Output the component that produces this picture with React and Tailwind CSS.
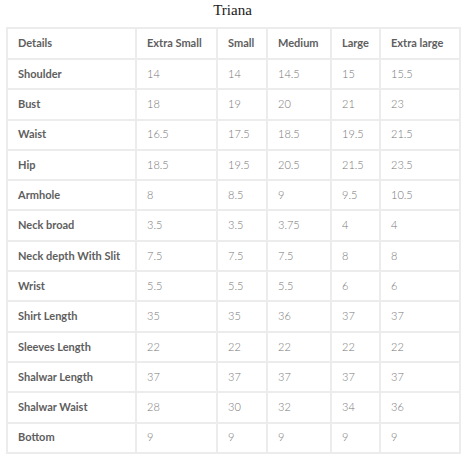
import React from "react";

const sizes = ["Extra Small", "Small", "Medium", "Large", "Extra large"];

const rows = [
  ["Shoulder", "14", "14", "14.5", "15", "15.5"],
  ["Bust", "18", "19", "20", "21", "23"],
  ["Waist", "16.5", "17.5", "18.5", "19.5", "21.5"],
  ["Hip", "18.5", "19.5", "20.5", "21.5", "23.5"],
  ["Armhole", "8", "8.5", "9", "9.5", "10.5"],
  ["Neck broad", "3.5", "3.5", "3.75", "4", "4"],
  ["Neck depth With Slit", "7.5", "7.5", "7.5", "8", "8"],
  ["Wrist", "5.5", "5.5", "5.5", "6", "6"],
  ["Shirt Length", "35", "35", "36", "37", "37"],
  ["Sleeves Length", "22", "22", "22", "22", "22"],
  ["Shalwar Length", "37", "37", "37", "37", "37"],
  ["Shalwar Waist", "28", "30", "32", "34", "36"],
  ["Bottom", "9", "9", "9", "9", "9"],
];

export default function App() {
  return (
    <div className="w-[465px] h-[461px] bg-white font-['Lato',sans-serif]">
      {/* Title */}
      <div className="h-[27px] pt-[1px] text-center font-['Liberation_Serif',serif] text-[15px] leading-[18px] text-[#1a1a1a]">
        Triana
      </div>

      {/* Size chart */}
      <table className="ml-[6px] w-[453px] table-fixed border-collapse border-2 border-[#ececec] text-[11px]">
        <colgroup>
          <col className="w-[129px]" />
          <col className="w-[81px]" />
          <col className="w-[50px]" />
          <col className="w-[64px]" />
          <col className="w-[49px]" />
          <col className="w-[80px]" />
        </colgroup>
        <thead>
          <tr className="h-[31px]">
            <th className="border-2 border-[#ececec] pl-[10px] text-left font-bold text-[#5e5e5e]">
              Details
            </th>
            {sizes.map((s) => (
              <th
                key={s}
                className="border-2 border-[#ececec] pl-[10px] text-left font-bold text-[#5e5e5e] whitespace-nowrap"
              >
                {s}
              </th>
            ))}
          </tr>
        </thead>
        <tbody>
          {rows.map((r) => (
            <tr key={r[0]} className="h-[30.3px]">
              <td className="border-2 border-[#ececec] pl-[10px] font-bold text-[#5e5e5e] whitespace-nowrap">
                {r[0]}
              </td>
              {r.slice(1).map((v, i) => (
                <td
                  key={i}
                  className="border-2 border-[#ececec] pl-[10px] font-light text-[#777]"
                >
                  {v}
                </td>
              ))}
            </tr>
          ))}
        </tbody>
      </table>
    </div>
  );
}
